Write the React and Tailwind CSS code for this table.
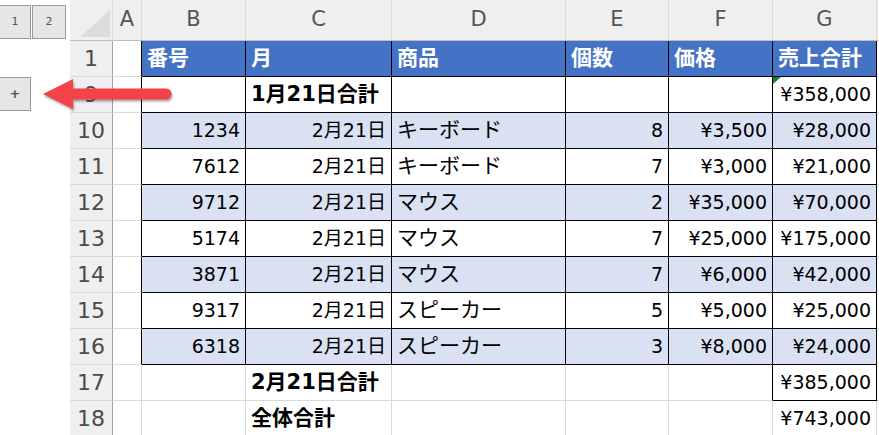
import React from 'react';

const FONT = "font-['DejaVu_Sans','Noto_Sans_CJK_JP',sans-serif]";

const COLS = [
  { id: 'A', w: 'w-[29px]' },
  { id: 'B', w: 'w-[104px]' },
  { id: 'C', w: 'w-[146px]' },
  { id: 'D', w: 'w-[174px]' },
  { id: 'E', w: 'w-[103px]' },
  { id: 'F', w: 'w-[104px]' },
  { id: 'G', w: 'w-[104px]' },
];

const HEADERS = ['番号', '月', '商品', '個数', '価格', '売上合計'];

const ROWS = [
  ['1234', '2月21日', 'キーボード', '8', '¥3,500', '¥28,000'],
  ['7612', '2月21日', 'キーボード', '7', '¥3,000', '¥21,000'],
  ['9712', '2月21日', 'マウス', '2', '¥35,000', '¥70,000'],
  ['5174', '2月21日', 'マウス', '7', '¥25,000', '¥175,000'],
  ['3871', '2月21日', 'マウス', '7', '¥6,000', '¥42,000'],
  ['9317', '2月21日', 'スピーカー', '5', '¥5,000', '¥25,000'],
  ['6318', '2月21日', 'スピーカー', '3', '¥8,000', '¥24,000'],
];

function RowHead({ label }) {
  return (
    <div className="w-[43px] shrink-0 h-full bg-[#efefef] border-r border-b border-r-[#a6a6a6] border-b-[#dadada] flex items-center justify-center text-[22px] text-[#4a4a4a]">
      {label}
    </div>
  );
}

function Cell({ w, className = '', children }) {
  return (
    <div className={`${w} shrink-0 h-full border-r border-b flex items-center px-[5px] whitespace-nowrap relative ${className}`}>
      {children}
    </div>
  );
}

function Rest({ className = '' }) {
  return <div className={`flex-1 h-full border-b border-b-[#dadada] ${className}`} />;
}

function Row({ children }) {
  return <div className="h-[36px] flex shrink-0">{children}</div>;
}

export default function App() {
  return (
    <div className={`w-[879px] h-[435px] overflow-hidden bg-white flex relative ${FONT}`}>
      {/* outline level buttons */}
      <div className="w-[70px] shrink-0 flex flex-col pt-[5px]">
        <div className="flex gap-[1px]">
          <div className="w-[31px] h-[34px] bg-[#e6e6e6] border-y border-r border-[#9a9a9a] flex items-center justify-center text-[11px] text-[#555]">1</div>
          <div className="w-[34px] h-[34px] bg-[#e6e6e6] border border-[#9a9a9a] flex items-center justify-center text-[11px] text-[#555]">2</div>
        </div>
        <div className="mt-[38px] w-[31px] h-[34px] bg-[#e6e6e6] border-y border-r border-[#9a9a9a] flex items-center justify-center text-[13px] font-bold text-[#555]">+</div>
      </div>

      <div className="flex-1 flex flex-col">
        {/* column letters */}
        <div className="h-[41px] flex shrink-0 bg-[#efefef]">
          <div className="w-[43px] shrink-0 h-full border-r border-b border-r-[#dadada] border-b-[#bdbdbd] flex items-end justify-end pr-[2px] pb-[3px]">
            <svg width="30" height="27" viewBox="0 0 30 27">
              <path d="M30 0 L30 27 L0 27 Z" fill="#dcdcdc" />
            </svg>
          </div>
          {COLS.map((c) => (
            <div key={c.id} className={`${c.w} shrink-0 h-full border-r border-b border-r-[#dadada] border-b-[#bdbdbd] flex items-center justify-center text-[21px] text-[#555]`}>
              {c.id}
            </div>
          ))}
          <div className="flex-1 h-full border-b border-b-[#bdbdbd]" />
        </div>

        {/* row 1: table header */}
        <Row>
          <RowHead label="1" />
          <Cell w={COLS[0].w} className="border-r-black border-b-[#dadada]" />
          {HEADERS.map((h, i) => (
            <Cell key={h} w={COLS[i + 1].w} className="border-black bg-[#4472c4] text-white font-bold text-[21px]">
              {h}
            </Cell>
          ))}
          <Rest />
        </Row>

        {/* row 9: subtotal */}
        <Row>
          <RowHead label="9" />
          <Cell w={COLS[0].w} className="border-r-black border-b-[#dadada]" />
          <Cell w={COLS[1].w} className="border-black" />
          <Cell w={COLS[2].w} className="border-black font-bold text-[21px]">1月21日合計</Cell>
          <Cell w={COLS[3].w} className="border-black" />
          <Cell w={COLS[4].w} className="border-black" />
          <Cell w={COLS[5].w} className="border-black" />
          <Cell w={COLS[6].w} className="border-black justify-end text-[19px]">
            <span className="absolute left-0 top-0 w-0 h-0 border-t-[7px] border-r-[8px] border-t-[#1f7a3a] border-r-transparent" />
            ¥358,000
          </Cell>
          <Rest />
        </Row>

        {ROWS.map((r, idx) => {
          const band = idx % 2 === 0 ? 'bg-[#d9e1f2]' : 'bg-white';
          return (
            <Row key={idx}>
              <RowHead label={String(10 + idx)} />
              <Cell w={COLS[0].w} className="border-r-black border-b-[#dadada]" />
              {r.map((v, i) => (
                <Cell
                  key={i}
                  w={COLS[i + 1].w}
                  className={`border-black ${band} ${i === 2 ? 'justify-start text-[21px]' : 'justify-end text-[19px]'}`}
                >
                  {v}
                </Cell>
              ))}
              <Rest />
            </Row>
          );
        })}

        {/* row 17 */}
        <Row>
          <RowHead label="17" />
          <Cell w={COLS[0].w} className="border-[#dadada]" />
          <Cell w={COLS[1].w} className="border-[#dadada]" />
          <Cell w={COLS[2].w} className="border-[#dadada] font-bold text-[21px]">2月21日合計</Cell>
          <Cell w={COLS[3].w} className="border-[#dadada]" />
          <Cell w={COLS[4].w} className="border-[#dadada]" />
          <Cell w={COLS[5].w} className="border-r-black border-b-[#dadada]" />
          <Cell w={COLS[6].w} className="border-black justify-end text-[19px]">¥385,000</Cell>
          <Rest />
        </Row>

        {/* row 18 */}
        <Row>
          <RowHead label="18" />
          <Cell w={COLS[0].w} className="border-[#dadada]" />
          <Cell w={COLS[1].w} className="border-[#dadada]" />
          <Cell w={COLS[2].w} className="border-[#dadada] font-bold text-[21px]">全体合計</Cell>
          <Cell w={COLS[3].w} className="border-[#dadada]" />
          <Cell w={COLS[4].w} className="border-[#dadada]" />
          <Cell w={COLS[5].w} className="border-[#dadada]" />
          <Cell w={COLS[6].w} className="border-[#dadada] justify-end text-[19px]">¥743,000</Cell>
          <Rest />
        </Row>
      </div>

      {/* red callout arrow */}
      <svg
        className="absolute left-[38px] top-[73px] drop-shadow-[1px_2px_1px_rgba(0,0,0,0.35)]"
        width="140"
        height="46"
        viewBox="0 0 140 46"
      >
        <line x1="30" y1="21" x2="128" y2="21" stroke="#f44249" strokeWidth="11" strokeLinecap="round" />
        <path d="M5 21 L35 6 L35 36 Z" fill="#f44249" />
      </svg>
    </div>
  );
}
